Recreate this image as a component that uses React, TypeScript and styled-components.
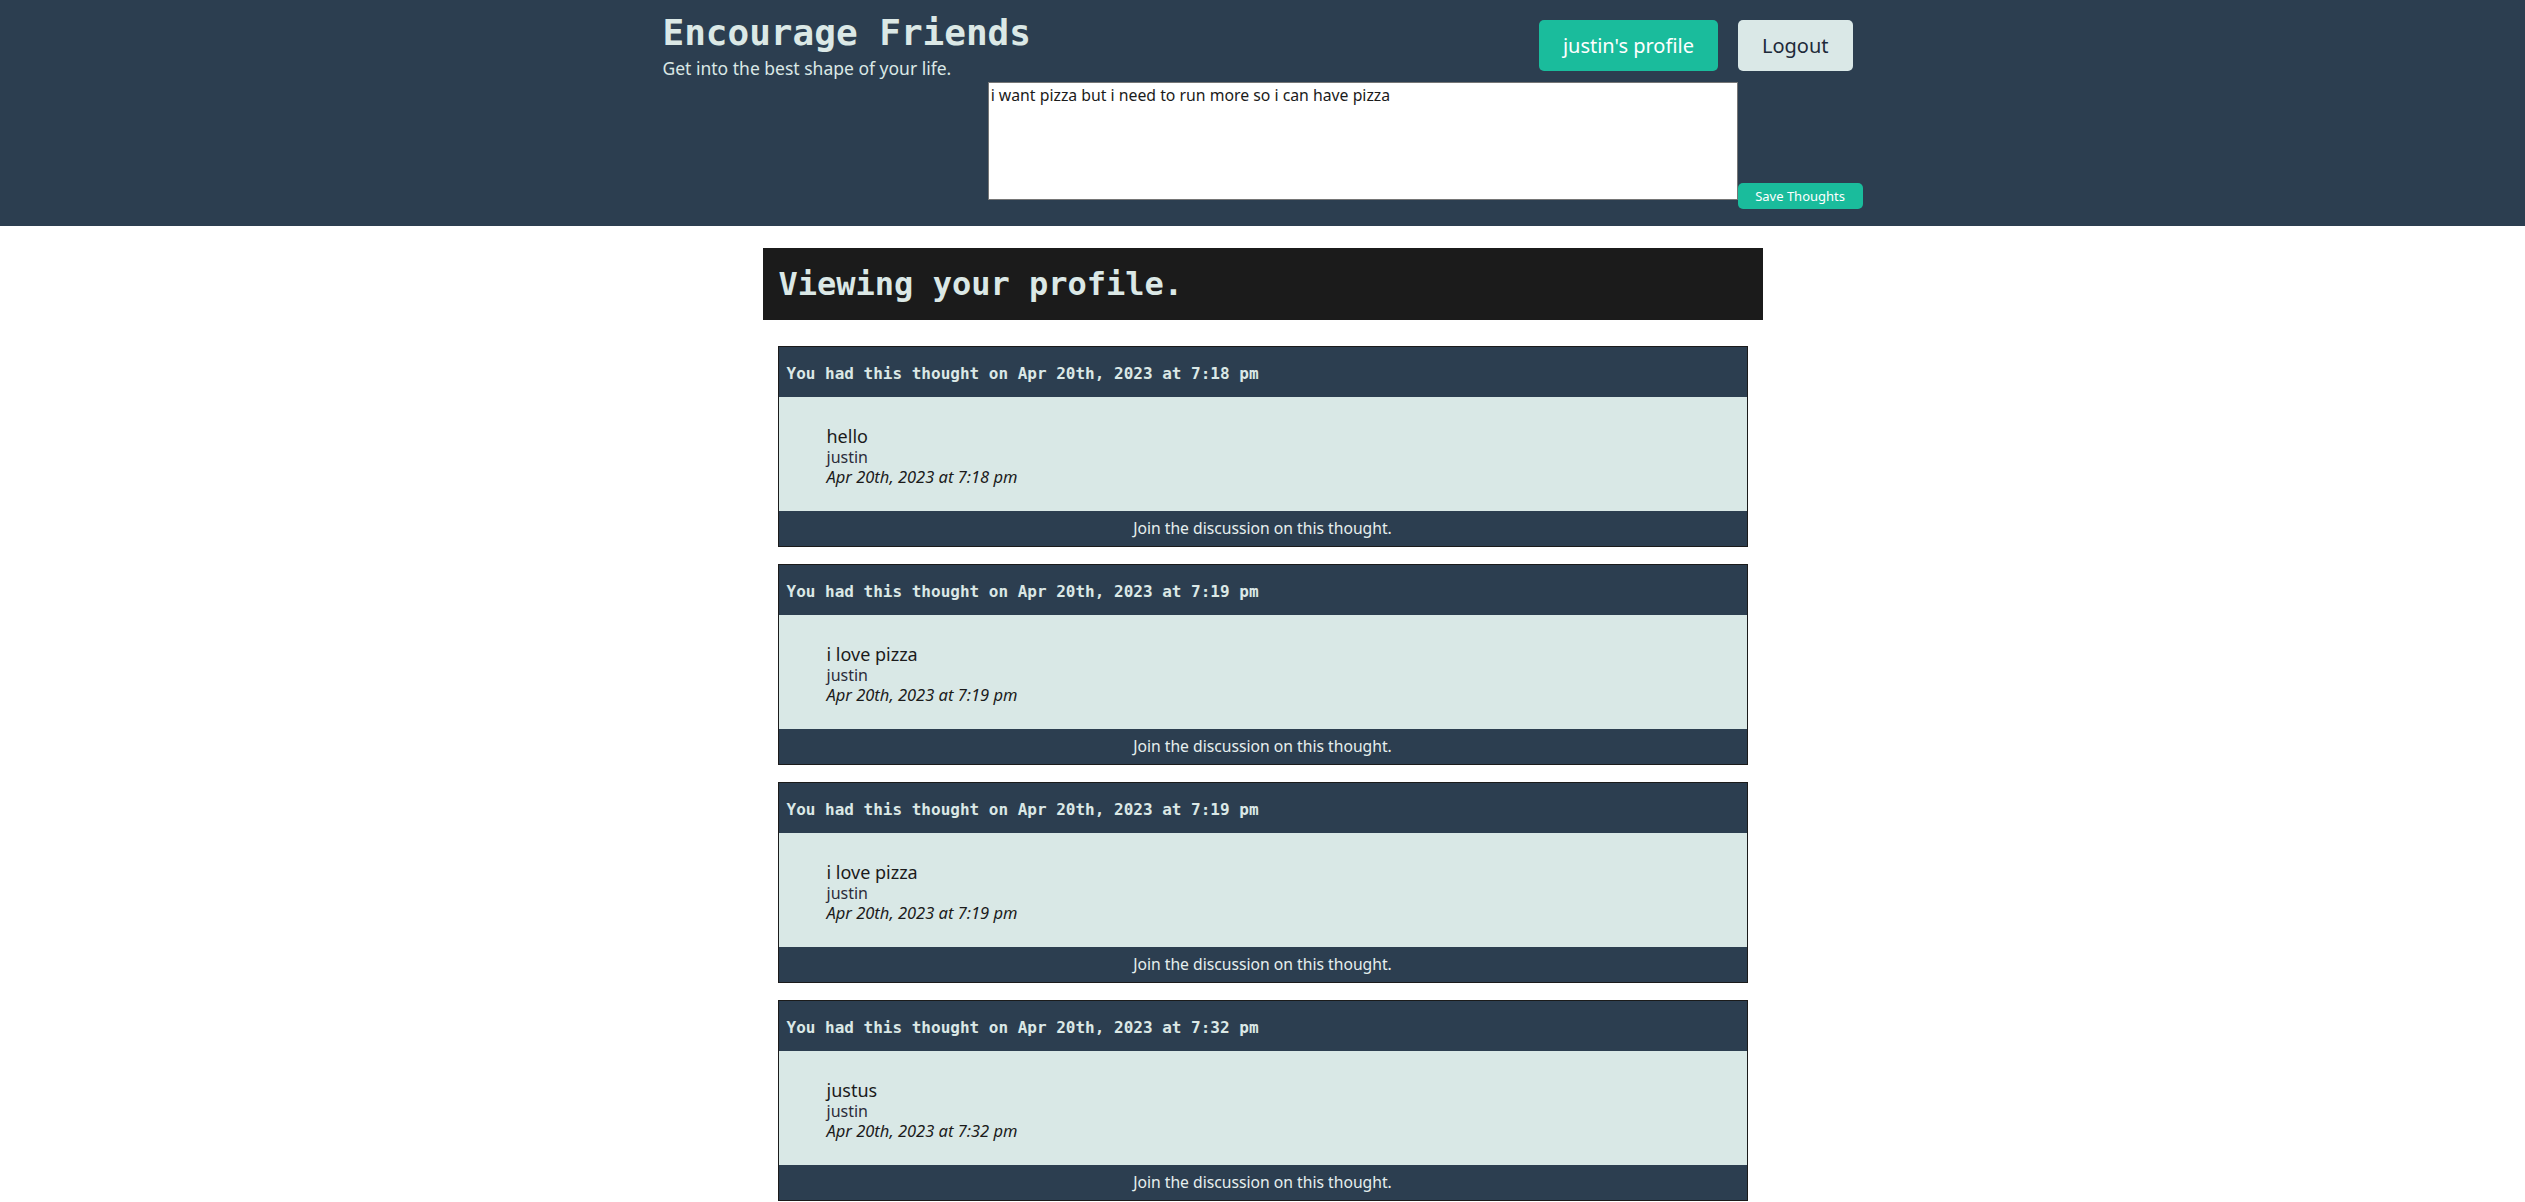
import React from "react";
import styled, { createGlobalStyle } from "styled-components";

const GlobalStyle = createGlobalStyle`
  html, body {
    margin: 0;
    padding: 0;
    background: #ffffff;
  }
  body {
    font-family: "Noto Sans", "Open Sans", "Liberation Sans", sans-serif;
    font-stretch: 87.5%;
    color: #1b1b1b;
  }
  * { box-sizing: border-box; }
`;

const mono = `"DejaVu Sans Mono", "Liberation Mono", monospace`;

const Header = styled.header`
  background: #2c3e50;
  padding-bottom: 17px;
`;

const HeaderInner = styled.div`
  max-width: 1200px;
  margin: 0 auto;
  display: flex;
  justify-content: space-between;
  align-items: flex-start;
`;

const Brand = styled.div`
  flex: 0 1 auto;
  min-width: 0;
  padding-top: 11px;
`;

const Title = styled.h1`
  margin: 0;
  font-family: ${mono};
  font-size: 36px;
  font-weight: 700;
  line-height: 44px;
  white-space: nowrap;
  color: #dbe8e6;
`;

const Tagline = styled.p`
  margin: 2px 0 0;
  font-size: 17.5px;
  line-height: 22px;
  white-space: nowrap;
  color: #dbe8e6;
`;

const Nav = styled.div`
  flex: none;
  padding-top: 20px;
  display: flex;
  flex-direction: column;
  align-items: flex-end;
`;

const ButtonRow = styled.div`
  display: flex;
  gap: 20px;
  margin-right: 10px;
`;

const NavButton = styled.button<{ $variant: "primary" | "light" }>`
  height: 51px;
  padding: 0 24px;
  border: none;
  border-radius: 5px;
  font-family: inherit;
  font-stretch: inherit;
  font-size: 20px;
  background: ${(p) => (p.$variant === "primary" ? "#1abc9c" : "#dae8e7")};
  color: ${(p) => (p.$variant === "primary" ? "#ffffff" : "#1e2a3a")};
  cursor: pointer;
`;

const ThoughtForm = styled.form`
  margin-top: 11px;
  display: flex;
  align-items: flex-end;
`;

const ThoughtInput = styled.textarea`
  flex: none;
  width: 750px;
  height: 118px;
  margin: 0 0 9px;
  padding: 2px;
  border: 1px solid #767676;
  background: #ffffff;
  font-family: inherit;
  font-stretch: inherit;
  font-size: 15.8px;
  line-height: 20px;
  color: #1b1b1b;
  resize: none;
`;

const SaveButton = styled.button`
  flex: none;
  height: 26px;
  padding: 0 17.5px;
  border: none;
  border-radius: 5px;
  background: #1abc9c;
  color: #ffffff;
  font-family: inherit;
  font-stretch: inherit;
  font-size: 13px;
  white-space: nowrap;
  cursor: pointer;
`;

const Main = styled.main`
  max-width: 1000px;
  margin: 22px auto 0;
`;

const Banner = styled.h2`
  margin: 0;
  height: 72px;
  padding: 0 16px;
  background: #1b1b1b;
  color: #dbe8e6;
  font-family: ${mono};
  font-size: 32px;
  font-weight: 700;
  line-height: 72px;
`;

const CardList = styled.div`
  display: flex;
  flex-direction: column;
  gap: 17px;
  padding: 26px 15px 0;
`;

const Card = styled.article`
  border: 1px solid #1b1b1b;
  display: flex;
  flex-direction: column;
`;

const CardHeader = styled.h3`
  margin: 0;
  height: 50px;
  padding: 4px 8px 0;
  background: #2c3e50;
  color: #dbe8e6;
  font-family: ${mono};
  font-size: 16px;
  font-weight: 700;
  line-height: 46px;
`;

const CardBody = styled.div`
  background: #d9e8e6;
  padding: 28px 48px 25px;
`;

const ThoughtText = styled.p`
  margin: 0;
  font-size: 18px;
  line-height: 22px;
  color: #1b1b1b;
`;

const Author = styled.div`
  font-size: 16px;
  line-height: 20px;
  color: #2c2c3a;
`;

const Stamp = styled.div`
  font-size: 16.5px;
  line-height: 19px;
  font-style: italic;
  color: #1b1b1b;
`;

const CardFooter = styled.a`
  display: block;
  height: 35px;
  background: #2c3e50;
  color: #e6efee;
  text-align: center;
  font-size: 15.7px;
  line-height: 35px;
  text-decoration: none;
`;

type Thought = { text: string; user: string; at: string };

const thoughts: Thought[] = [
  { text: "hello", user: "justin", at: "Apr 20th, 2023 at 7:18 pm" },
  { text: "i love pizza", user: "justin", at: "Apr 20th, 2023 at 7:19 pm" },
  { text: "i love pizza", user: "justin", at: "Apr 20th, 2023 at 7:19 pm" },
  { text: "justus", user: "justin", at: "Apr 20th, 2023 at 7:32 pm" },
];

export default function App() {
  return (
    <>
      <GlobalStyle />
      <Header>
        <HeaderInner>
          <Brand>
            <Title>Encourage Friends</Title>
            <Tagline>Get into the best shape of your life.</Tagline>
          </Brand>
          <Nav>
            <ButtonRow>
              <NavButton $variant="primary">justin's profile</NavButton>
              <NavButton $variant="light">Logout</NavButton>
            </ButtonRow>
            <ThoughtForm onSubmit={(e) => e.preventDefault()}>
              <ThoughtInput defaultValue="i want pizza but i need to run more so i can have pizza" />
              <SaveButton type="submit">Save Thoughts</SaveButton>
            </ThoughtForm>
          </Nav>
        </HeaderInner>
      </Header>
      <Main>
        <Banner>Viewing your profile.</Banner>
        <CardList>
          {thoughts.map((t, i) => (
            <Card key={i}>
              <CardHeader>You had this thought on {t.at}</CardHeader>
              <CardBody>
                <ThoughtText>{t.text}</ThoughtText>
                <Author>{t.user}</Author>
                <Stamp>{t.at}</Stamp>
              </CardBody>
              <CardFooter href="#">Join the discussion on this thought.</CardFooter>
            </Card>
          ))}
        </CardList>
      </Main>
    </>
  );
}
